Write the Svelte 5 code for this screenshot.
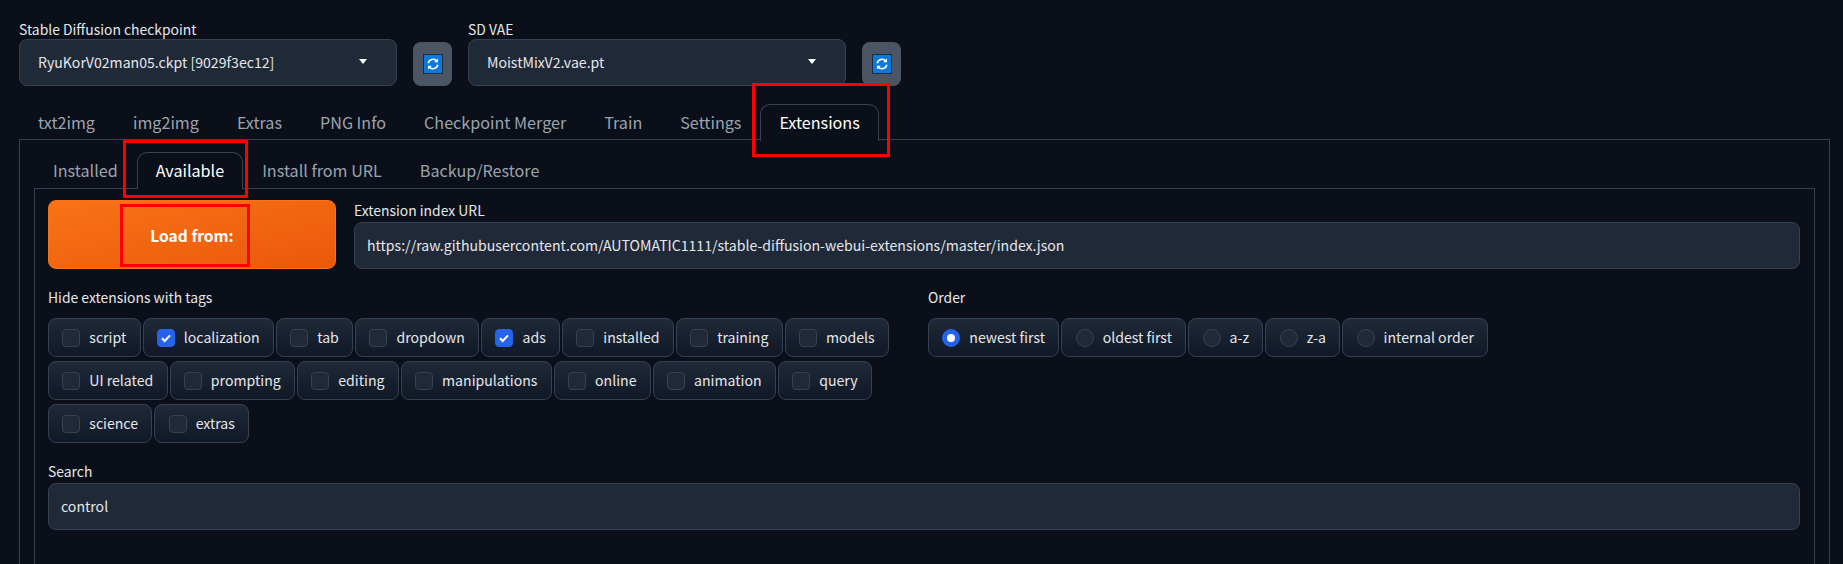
<script>
  const topTabs = ['txt2img', 'img2img', 'Extras', 'PNG Info', 'Checkpoint Merger', 'Train', 'Settings', 'Extensions']
  const subTabs = ['Installed', 'Available', 'Install from URL', 'Backup/Restore']
  const tagRows = [
    ['script', 'localization', 'tab', 'dropdown', 'ads', 'installed', 'training', 'models'],
    ['UI related', 'prompting', 'editing', 'manipulations', 'online', 'animation', 'query'],
    ['science', 'extras']
  ]
  const checked = ['localization', 'ads']
  const orders = ['newest first', 'oldest first', 'a-z', 'z-a', 'internal order']
</script>

<div class="page">
  <div class="quicksettings">
    <div class="setting">
      <span class="label">Stable Diffusion checkpoint</span>
      <div class="dropdown"><span>RyuKorV02man05.ckpt [9029f3ec12]</span><i class="caret"></i></div>
    </div>
    <button class="refresh" aria-label="refresh">{@render refreshIcon()}</button>
    <div class="setting">
      <span class="label">SD VAE</span>
      <div class="dropdown"><span>MoistMixV2.vae.pt</span><i class="caret"></i></div>
    </div>
    <button class="refresh" aria-label="refresh">{@render refreshIcon()}</button>
  </div>

  <div class="tabs top-tabs">
    {#each topTabs as tab}
      <div class="tab" class:active={tab === 'Extensions'}>{tab}</div>
    {/each}
  </div>

  <div class="panel outer">
    <div class="tabs sub-tabs">
      {#each subTabs as tab}
        <div class="tab" class:active={tab === 'Available'}>{tab}</div>
      {/each}
    </div>

    <div class="panel inner">
      <div class="load-row">
        <button class="load">Load from:</button>
        <div class="url">
          <span class="label">Extension index URL</span>
          <div class="input">https://raw.githubusercontent.com/AUTOMATIC1111/stable-diffusion-webui-extensions/master/index.json</div>
        </div>
      </div>

      <div class="filters">
        <div class="tags">
          <span class="label">Hide extensions with tags</span>
          {#each tagRows as row}
            <div class="chips">
              {#each row as tag}
                <div class="chip">
                  <span class="box" class:on={checked.includes(tag)}>
                    {#if checked.includes(tag)}
                      <svg viewBox="0 0 16 16" width="16" height="16"><path d="M4 8.3l2.7 2.7L12 5.4" fill="none" stroke="#fff" stroke-width="2"/></svg>
                    {/if}
                  </span>
                  <span class="text">{tag}</span>
                </div>
              {/each}
            </div>
          {/each}
        </div>
        <div class="order">
          <span class="label">Order</span>
          <div class="chips">
            {#each orders as o, i}
              <div class="chip">
                <span class="dot" class:on={i === 0}></span>
                <span class="text">{o}</span>
              </div>
            {/each}
          </div>
        </div>
      </div>

      <div class="search">
        <span class="label">Search</span>
        <div class="input">control</div>
      </div>
    </div>
  </div>

  <div class="mark mark-ext"></div>
  <div class="mark mark-avail"></div>
  <div class="mark mark-load"></div>
</div>

{#snippet refreshIcon()}
  <svg viewBox="0 0 20 20" width="20" height="20">
    <rect width="20" height="20" fill="#1c2b3e"/>
    <rect x="1" y="1" width="18" height="18" fill="#0a78dc"/>
    <path d="M5.2 9.2A5 5 0 0 1 14 7.2M14.8 10.8A5 5 0 0 1 6 12.8" fill="none" stroke="#fff" stroke-width="1.6"/>
    <path d="M15 4.4v3.8h-3.8zM5 15.6v-3.8h3.8z" fill="#fff"/>
  </svg>
{/snippet}

<style>
  :global(body) {
    background: #0b0f19;
  }

  .page {
    position: relative;
    height: 564px;
    overflow: hidden;
    box-sizing: border-box;
    padding: 19px 13px 0 19px;
    font-family: "Noto Sans CJK JP", "Source Sans Pro", sans-serif;
    font-size: 14.1px;
    color: #e5e7eb;
  }

  .label {
    display: block;
    font-size: 13.9px;
    line-height: 20px;
  }

  .quicksettings {
    display: flex;
    align-items: flex-end;
    height: 67px;
  }

  .setting {
    width: 378px;
  }

  .dropdown {
    display: flex;
    align-items: center;
    justify-content: space-between;
    box-sizing: border-box;
    height: 47px;
    padding: 0 29px 2px 18px;
    background: #1f2937;
    border: 1px solid #374151;
    border-radius: 8px;
  }

  .caret {
    border: 4px solid transparent;
    border-top: 5px solid #fff;
    border-bottom: 0;
  }

  .refresh {
    display: flex;
    align-items: center;
    justify-content: center;
    width: 39px;
    height: 44px;
    padding: 0;
    margin: 0 16px 0 16px;
    background: #4b5563;
    border: 0;
    border-radius: 8px;
  }

  .tabs {
    display: flex;
    position: relative;
    z-index: 1;
  }

  .top-tabs {
    height: 36px;
    margin-top: 18px;
    margin-bottom: -1px;
  }

  .tab {
    box-sizing: border-box;
    padding: 0 18px;
    line-height: 35px;
    font-size: 16.15px;
    color: #9ca3af;
    border: 1px solid transparent;
    border-bottom: 0;
    border-radius: 10px 10px 0 0;
  }

  .tab.active {
    color: #fff;
    background: #0b0f19;
    border-color: #374151;
    height: 37px;
  }

  .panel {
    box-sizing: border-box;
    border: 1px solid #374151;
  }

  .outer {
    height: 500px;
    padding: 12px 14px 0;
  }

  .sub-tabs {
    height: 37px;
    margin-bottom: -1px;
  }

  .inner {
    height: 400px;
    padding: 11px 14px 0 13px;
  }

  .load-row {
    display: flex;
    gap: 18px;
    align-items: flex-end;
  }

  .load {
    width: 288px;
    height: 69px;
    padding: 0;
    color: #fff;
    font: 600 15.6px "Noto Sans CJK JP", sans-serif;
    background: linear-gradient(to bottom right, #f97316, #ea580c);
    border: 1px solid #f97316;
    border-radius: 8px;
  }

  .url {
    flex: 1;
  }

  .url .label {
    margin-bottom: 2px;
  }

  .input {
    display: flex;
    align-items: center;
    box-sizing: border-box;
    height: 47px;
    padding: 0 12px 2px;
    background: #1f2937;
    border: 1px solid #374151;
    border-radius: 8px;
  }

  .filters {
    display: flex;
    margin-top: 18px;
  }

  .tags {
    width: 880px;
  }

  .tags .label,
  .order .label {
    margin-bottom: 11px;
  }

  .chips {
    display: flex;
    gap: 2px;
    margin-bottom: 4px;
  }

  .chip {
    display: flex;
    align-items: center;
    gap: 9px;
    box-sizing: border-box;
    height: 39px;
    padding: 0 13.3px;
    background: linear-gradient(to top, #111827, #1f2937);
    border: 1px solid #374151;
    border-radius: 8px;
    white-space: nowrap;
  }

  .text {
    padding-bottom: 2px;
  }

  .box {
    box-sizing: border-box;
    width: 18px;
    height: 18px;
    background: #1f2937;
    border: 1px solid #374151;
    border-radius: 4px;
  }

  .box.on {
    background: #2563eb;
    border-color: #2563eb;
  }

  .box svg {
    display: block;
    margin: 0;
  }

  .dot {
    box-sizing: border-box;
    width: 18px;
    height: 18px;
    background: #1f2937;
    border: 1px solid #374151;
    border-radius: 50%;
  }

  .dot.on {
    background: #fff;
    border: 5px solid #2563eb;
  }

  .search {
    margin-top: 14px;
  }

  .search .label {
    margin-bottom: 2px;
  }

  .mark {
    position: absolute;
    box-sizing: border-box;
    border: 3px solid #f00;
    z-index: 2;
  }

  .mark-ext {
    left: 752px;
    top: 83px;
    width: 138px;
    height: 74px;
  }

  .mark-avail {
    left: 123px;
    top: 140px;
    width: 125px;
    height: 58px;
  }

  .mark-load {
    left: 120px;
    top: 204px;
    width: 130px;
    height: 63px;
  }
</style>
